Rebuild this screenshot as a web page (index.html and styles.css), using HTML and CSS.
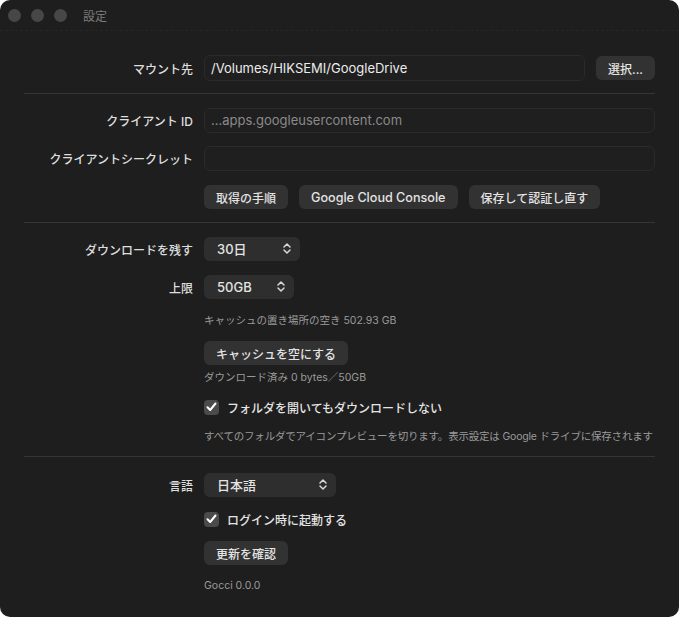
FILE: index.html
```html
<!DOCTYPE html>
<html lang="ja">

<head>
    <meta charset="UTF-8">
    <meta name="viewport" content="width=device-width, initial-scale=1.0">
    <title>設定</title>
    <link rel="stylesheet" href="styles.css">
</head>

<body>
    <div class="window">
        <div class="titlebar">
            <span class="light"></span>
            <span class="light"></span>
            <span class="light"></span>
            <span class="title">設定</span>
        </div>

        <!-- マウント先 -->
        <div class="section s1">
            <div class="row">
                <label class="label">マウント先</label>
                <div class="ctl inline">
                    <div class="field grow">/Volumes/HIKSEMI/GoogleDrive</div>
                    <button class="btn">選択...</button>
                </div>
            </div>
        </div>
        <hr class="divider">

        <!-- 認証 -->
        <div class="section s2">
            <div class="row">
                <label class="label">クライアント ID</label>
                <div class="ctl">
                    <div class="field placeholder">...apps.googleusercontent.com</div>
                </div>
            </div>
            <div class="row gap13">
                <label class="label">クライアントシークレット</label>
                <div class="ctl">
                    <div class="field"></div>
                </div>
            </div>
            <div class="row gap14">
                <div class="ctl inline">
                    <button class="btn">取得の手順</button>
                    <button class="btn lat">Google Cloud Console</button>
                    <button class="btn">保存して認証し直す</button>
                </div>
            </div>
        </div>
        <hr class="divider">

        <!-- キャッシュ -->
        <div class="section s3">
            <div class="row">
                <label class="label">ダウンロードを残す</label>
                <div class="ctl">
                    <div class="select w96">30日<span class="chev"><svg width="8" height="11" viewBox="0 0 8 11"><path d="M1 4 4 1 7 4M1 7l3 3 3-3" fill="none" stroke="#d8d8d8" stroke-width="1.5" stroke-linecap="round" stroke-linejoin="round"/></svg></span></div>
                </div>
            </div>
            <div class="row gap14">
                <label class="label">上限</label>
                <div class="ctl">
                    <div class="select w90">50GB<span class="chev"><svg width="8" height="11" viewBox="0 0 8 11"><path d="M1 4 4 1 7 4M1 7l3 3 3-3" fill="none" stroke="#d8d8d8" stroke-width="1.5" stroke-linecap="round" stroke-linejoin="round"/></svg></span></div>
                </div>
            </div>
            <div class="row gap15">
                <p class="ctl note">キャッシュの置き場所の空き 502.93 GB</p>
            </div>
            <div class="row gap13">
                <div class="ctl"><button class="btn">キャッシュを空にする</button></div>
            </div>
            <div class="row gap6">
                <p class="ctl note">ダウンロード済み 0 bytes／50GB</p>
            </div>
            <div class="row gap14">
                <div class="ctl check">
                    <span class="box"><svg width="11" height="10" viewBox="0 0 11 10"><path d="M1.5 5.2 4.2 8 9.5 1.5" fill="none" stroke="#fff" stroke-width="2" stroke-linecap="round" stroke-linejoin="round"/></svg></span>
                    フォルダを開いてもダウンロードしない
                </div>
            </div>
            <div class="row gap15">
                <p class="ctl note tight">すべてのフォルダでアイコンプレビューを切ります。表示設定は Google ドライブに保存されます</p>
            </div>
        </div>
        <hr class="divider">

        <!-- 一般 -->
        <div class="section s4">
            <div class="row">
                <label class="label">言語</label>
                <div class="ctl">
                    <div class="select w132">日本語<span class="chev"><svg width="8" height="11" viewBox="0 0 8 11"><path d="M1 4 4 1 7 4M1 7l3 3 3-3" fill="none" stroke="#d8d8d8" stroke-width="1.5" stroke-linecap="round" stroke-linejoin="round"/></svg></span></div>
                </div>
            </div>
            <div class="row gap14">
                <div class="ctl check">
                    <span class="box"><svg width="11" height="10" viewBox="0 0 11 10"><path d="M1.5 5.2 4.2 8 9.5 1.5" fill="none" stroke="#fff" stroke-width="2" stroke-linecap="round" stroke-linejoin="round"/></svg></span>
                    ログイン時に起動する
                </div>
            </div>
            <div class="row gap14">
                <div class="ctl"><button class="btn">更新を確認</button></div>
            </div>
            <div class="row gap14">
                <p class="ctl note">Gocci 0.0.0</p>
            </div>
        </div>
    </div>
</body>

</html>
```

FILE: styles.css
```css
* {
    margin: 0;
    padding: 0;
    box-sizing: border-box;
}

body {
    background: #fff;
    font-family: Inter, "Noto Sans CJK JP", sans-serif;
    color: #e2e2e2;
}

.window {
    width: 679px;
    height: 617px;
    background: #1e1e1e;
    border-radius: 10px;
    overflow: hidden;
}

.titlebar {
    height: 31px;
    display: flex;
    align-items: center;
    padding-left: 8px;
    gap: 10px;
    border-bottom: 1px dashed #262626;
}

.light {
    width: 13px;
    height: 13px;
    border-radius: 50%;
    background: #474747;
}

.title {
    margin-left: 6px;
    font-size: 12px;
    color: #7c7c7c;
}

.section {
    padding: 0 24px 12px;
}

.s1 {
    padding-top: 24px;
}

.s2 {
    padding-top: 14px;
    padding-bottom: 13px;
}

.s3 {
    padding-top: 14px;
}

.s4 {
    padding-top: 16px;
}

.divider {
    border: 0;
    height: 1px;
    background: #353535;
    margin: 0 24px;
}

.row {
    display: grid;
    grid-template-columns: 169px 1fr;
    column-gap: 11px;
    align-items: center;
}

.row .ctl {
    grid-column: 2;
}

.gap6 {
    margin-top: 6px;
}

.gap13 {
    margin-top: 13px;
}

.gap14 {
    margin-top: 14px;
}

.gap15 {
    margin-top: 15px;
}

.label {
    text-align: right;
    font-size: 12px;
    font-weight: 500;
    color: #dedede;
}

.inline {
    display: flex;
    gap: 11px;
}

.grow {
    flex: 1;
}

.field {
    height: 25px;
    line-height: 23px;
    padding: 0 6px;
    border: 1px solid #2b2b2b;
    border-radius: 6px;
    background: #1f1f1f;
    font-size: 13px;
    color: #ececec;
}

.s1 .field {
    height: 26px;
    line-height: 24px;
}

.placeholder {
    color: #8a8a8a;
}

.btn {
    height: 24px;
    padding: 0 12px;
    border: 0;
    border-radius: 6px;
    background: #323232;
    font-family: inherit;
    font-size: 12px;
    font-weight: 500;
    color: #e4e4e4;
}

.btn.lat {
    font-size: 12.6px;
}

.s1 .btn {
    margin-top: 1px;
}

.select {
    position: relative;
    height: 24px;
    line-height: 24px;
    padding-left: 13px;
    border-radius: 6px;
    background: #2e2e2e;
    font-size: 13px;
    font-weight: 500;
    color: #e4e4e4;
}

.w96 {
    width: 96px;
}

.w90 {
    width: 90px;
}

.w132 {
    width: 132px;
}

.chev {
    position: absolute;
    right: 9px;
    top: 6px;
    line-height: 0;
}

.note {
    font-size: 10.5px;
    line-height: 14px;
    color: #9a9a9a;
    white-space: nowrap;
}

.tight {
    letter-spacing: -0.2px;
}

.check {
    display: flex;
    align-items: center;
    gap: 8px;
    height: 16px;
    font-size: 12px;
    font-weight: 500;
    color: #e4e4e4;
}

.box {
    width: 15px;
    height: 15px;
    border-radius: 4px;
    background: #4b4b4b;
    display: flex;
    align-items: center;
    justify-content: center;
}
```
